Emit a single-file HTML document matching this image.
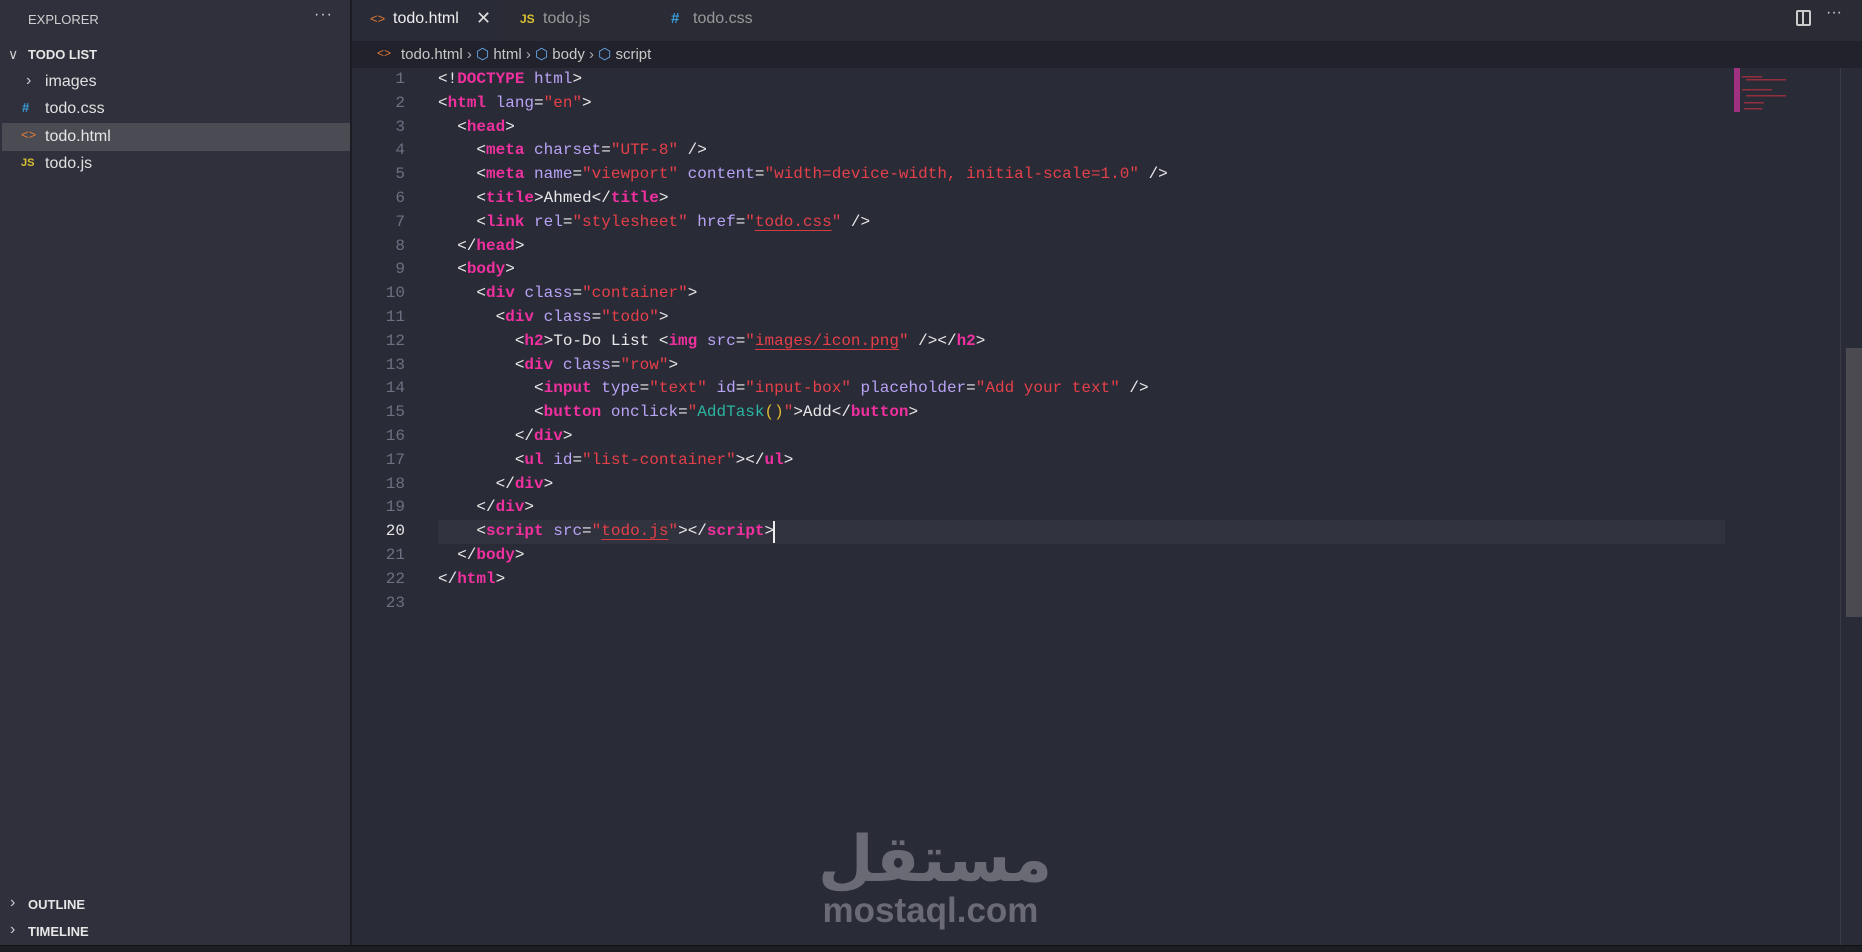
<!DOCTYPE html>
<html><head><meta charset="utf-8"><style>
*{margin:0;padding:0;box-sizing:border-box}
body{width:1862px;height:952px;overflow:hidden;background:#292b37;font-family:"Liberation Sans","DejaVu Sans",sans-serif;color:#d4d4d4;position:relative}
.side{position:absolute;left:0;top:0;width:352px;height:945px;background:#2f303b;border-right:2px solid #1c1d23}
.abs{position:absolute;white-space:nowrap}
.tabbar{position:absolute;left:352px;top:0;width:1510px;height:41px;background:#2a2b35}
.crumb{position:absolute;left:352px;top:41px;width:1510px;height:27px;background:#21222b;font-size:15px;color:#c8c8c8}
.ln{position:absolute;left:352px;width:53px;text-align:right;color:#6d7080;font-family:"Liberation Mono",monospace;font-size:16px}
.cl{position:absolute;left:438px;white-space:pre;font-family:"Liberation Mono",monospace;font-size:16px;color:#e8e8e8}
.t{color:#f0309f;font-weight:bold}.a{color:#b9a3f5}.s{color:#e5404a}.u{text-decoration:underline;text-decoration-color:#d63a40;text-underline-offset:4px}.g{color:#2bb5a0}.y{color:#e0b830}
.status{position:absolute;left:0;top:945px;width:1862px;height:7px;background:#1d1e24;border-top:1px solid #111}
.f{font-size:16px;color:#e0e0e0}
</style></head><body>
<div class="side">
<div class="abs" style="left:28px;top:12px;font-size:13px;color:#cfcfcf">EXPLORER</div>
<div class="abs" style="left:314px;top:6px;font-size:16px;color:#cfcfcf;letter-spacing:1px">···</div>
<div class="abs" style="left:8px;top:46px;font-size:14px;color:#ccc">∨</div>
<div class="abs" style="left:28px;top:47px;font-size:13px;font-weight:bold;color:#e6e6e6">TODO LIST</div>
<div class="abs" style="left:26px;top:72px;font-size:16px;color:#ccc">›</div>
<div class="abs f" style="left:45px;top:73px">images</div>
<div class="abs" style="left:22px;top:100px;font-size:13px;color:#3a9cd8;font-weight:bold">#</div>
<div class="abs f" style="left:45px;top:100px">todo.css</div>
<div class="abs" style="left:2px;top:123px;width:348px;height:28px;background:#4b4c53"></div>
<div class="abs" style="left:21px;top:127px;font-size:13px;color:#e37933">&lt;&gt;</div>
<div class="abs f" style="left:45px;top:128px;color:#e6e6e6">todo.html</div>
<div class="abs" style="left:21px;top:157px;font-size:11px;color:#d8c030;font-weight:bold">JS</div>
<div class="abs f" style="left:45px;top:155px">todo.js</div>
<div class="abs" style="left:10px;top:894px;font-size:16px;color:#ccc">›</div>
<div class="abs" style="left:28px;top:897px;font-size:13px;font-weight:bold;color:#e6e6e6">OUTLINE</div>
<div class="abs" style="left:10px;top:921px;font-size:16px;color:#ccc">›</div>
<div class="abs" style="left:28px;top:924px;font-size:13px;font-weight:bold;color:#e6e6e6">TIMELINE</div>
</div>
<div class="tabbar">
<div class="abs" style="left:0;top:0;width:148px;height:41px;background:#292b37"></div>
<div class="abs" style="left:18px;top:11px;font-size:13px;color:#e37933">&lt;&gt;</div>
<div class="abs" style="left:41px;top:10px;font-size:16px;color:#eee">todo.html</div>
<div class="abs" style="left:124px;top:8px;font-size:18px;color:#ddd">✕</div>
<div class="abs" style="left:168px;top:12px;font-size:12px;color:#d8c030;font-weight:bold">JS</div>
<div class="abs" style="left:191px;top:10px;font-size:16px;color:#999">todo.js</div>
<div class="abs" style="left:319px;top:10px;font-size:15px;color:#3a9cd8;font-weight:bold">#</div>
<div class="abs" style="left:341px;top:10px;font-size:16px;color:#999">todo.css</div>
<div class="abs" style="left:1444px;top:10px;width:15px;height:16px;border:2px solid #ccc;border-radius:2px"><div style="position:absolute;left:4px;top:0;width:2px;height:12px;background:#ccc"></div></div>
<div class="abs" style="left:1474px;top:4px;font-size:16px;color:#ccc">···</div>
</div>
<div class="crumb">
<div class="abs" style="left:25px;top:5px;font-size:12px;color:#e37933">&lt;&gt;</div>
<div class="abs" style="left:49px;top:4px">todo.html <span style="color:#aaa">›</span> <span style="color:#6aa8e8">⬡</span> html <span style="color:#aaa">›</span> <span style="color:#6aa8e8">⬡</span> body <span style="color:#aaa">›</span> <span style="color:#6aa8e8">⬡</span> script</div>
</div>
<div class="abs" style="left:438px;top:520px;width:1287px;height:24px;background:#30323d"></div>
<div class="abs" style="left:773px;top:521px;width:2px;height:22px;background:#eee"></div>
<div class="abs" style="left:1846px;top:348px;width:16px;height:269px;background:#4a4a50"></div>
<div class="abs" style="left:1840px;top:68px;width:1px;height:877px;background:#3a3b44"></div>
<svg class="abs" style="left:1732px;top:68px" width="80" height="45"><g fill="#a03080"><rect x="2" y="0" width="6" height="44"/></g><g fill="#b03040" opacity=".8"><rect x="10" y="8" width="20" height="1.5"/><rect x="14" y="11" width="40" height="1.5"/><rect x="10" y="21" width="30" height="1.5"/><rect x="14" y="27" width="40" height="1.5"/><rect x="12" y="34" width="20" height="1.5"/><rect x="12" y="40" width="18" height="1.5"/></g></svg>
<div class="ln" style="top:68px;line-height:23.8px">1<br>2<br>3<br>4<br>5<br>6<br>7<br>8<br>9<br>10<br>11<br>12<br>13<br>14<br>15<br>16<br>17<br>18<br>19<br><span style="color:#e6e6e6">20</span><br>21<br>22<br>23</div>
<div class="cl" style="top:68px;line-height:23.8px">&lt;!<span class="t">DOCTYPE</span> <span class="a">html</span>&gt;
&lt;<span class="t">html</span> <span class="a">lang</span>=<span class="s">"en"</span>&gt;
  &lt;<span class="t">head</span>&gt;
    &lt;<span class="t">meta</span> <span class="a">charset</span>=<span class="s">"UTF-8"</span> /&gt;
    &lt;<span class="t">meta</span> <span class="a">name</span>=<span class="s">"viewport"</span> <span class="a">content</span>=<span class="s">"width=device-width, initial-scale=1.0"</span> /&gt;
    &lt;<span class="t">title</span>&gt;Ahmed&lt;/<span class="t">title</span>&gt;
    &lt;<span class="t">link</span> <span class="a">rel</span>=<span class="s">"stylesheet"</span> <span class="a">href</span>=<span class="s">"<span class="u">todo.css</span>"</span> /&gt;
  &lt;/<span class="t">head</span>&gt;
  &lt;<span class="t">body</span>&gt;
    &lt;<span class="t">div</span> <span class="a">class</span>=<span class="s">"container"</span>&gt;
      &lt;<span class="t">div</span> <span class="a">class</span>=<span class="s">"todo"</span>&gt;
        &lt;<span class="t">h2</span>&gt;To-Do List &lt;<span class="t">img</span> <span class="a">src</span>=<span class="s">"<span class="u">images/icon.png</span>"</span> /&gt;&lt;/<span class="t">h2</span>&gt;
        &lt;<span class="t">div</span> <span class="a">class</span>=<span class="s">"row"</span>&gt;
          &lt;<span class="t">input</span> <span class="a">type</span>=<span class="s">"text"</span> <span class="a">id</span>=<span class="s">"input-box"</span> <span class="a">placeholder</span>=<span class="s">"Add your text"</span> /&gt;
          &lt;<span class="t">button</span> <span class="a">onclick</span>=<span class="s">"<span class="g">AddTask</span><span class="y">()</span>"</span>&gt;Add&lt;/<span class="t">button</span>&gt;
        &lt;/<span class="t">div</span>&gt;
        &lt;<span class="t">ul</span> <span class="a">id</span>=<span class="s">"list-container"</span>&gt;&lt;/<span class="t">ul</span>&gt;
      &lt;/<span class="t">div</span>&gt;
    &lt;/<span class="t">div</span>&gt;
    &lt;<span class="t">script</span> <span class="a">src</span>=<span class="s">"<span class="u">todo.js</span>"</span>&gt;&lt;/<span class="t">script</span>&gt;
  &lt;/<span class="t">body</span>&gt;
&lt;/<span class="t">html</span>&gt;
</div>
<div class="abs" style="left:818px;top:820px;width:225px;text-align:center;font-family:'DejaVu Sans',sans-serif;font-size:64px;font-weight:bold;color:#696a73;line-height:80px">مستقل</div>
<div class="abs" style="left:808px;top:891px;width:245px;text-align:center;font-family:'Liberation Sans',sans-serif;font-size:35px;font-weight:bold;color:#696a73">mostaql.com</div>
<div class="status"></div>
</body></html>
